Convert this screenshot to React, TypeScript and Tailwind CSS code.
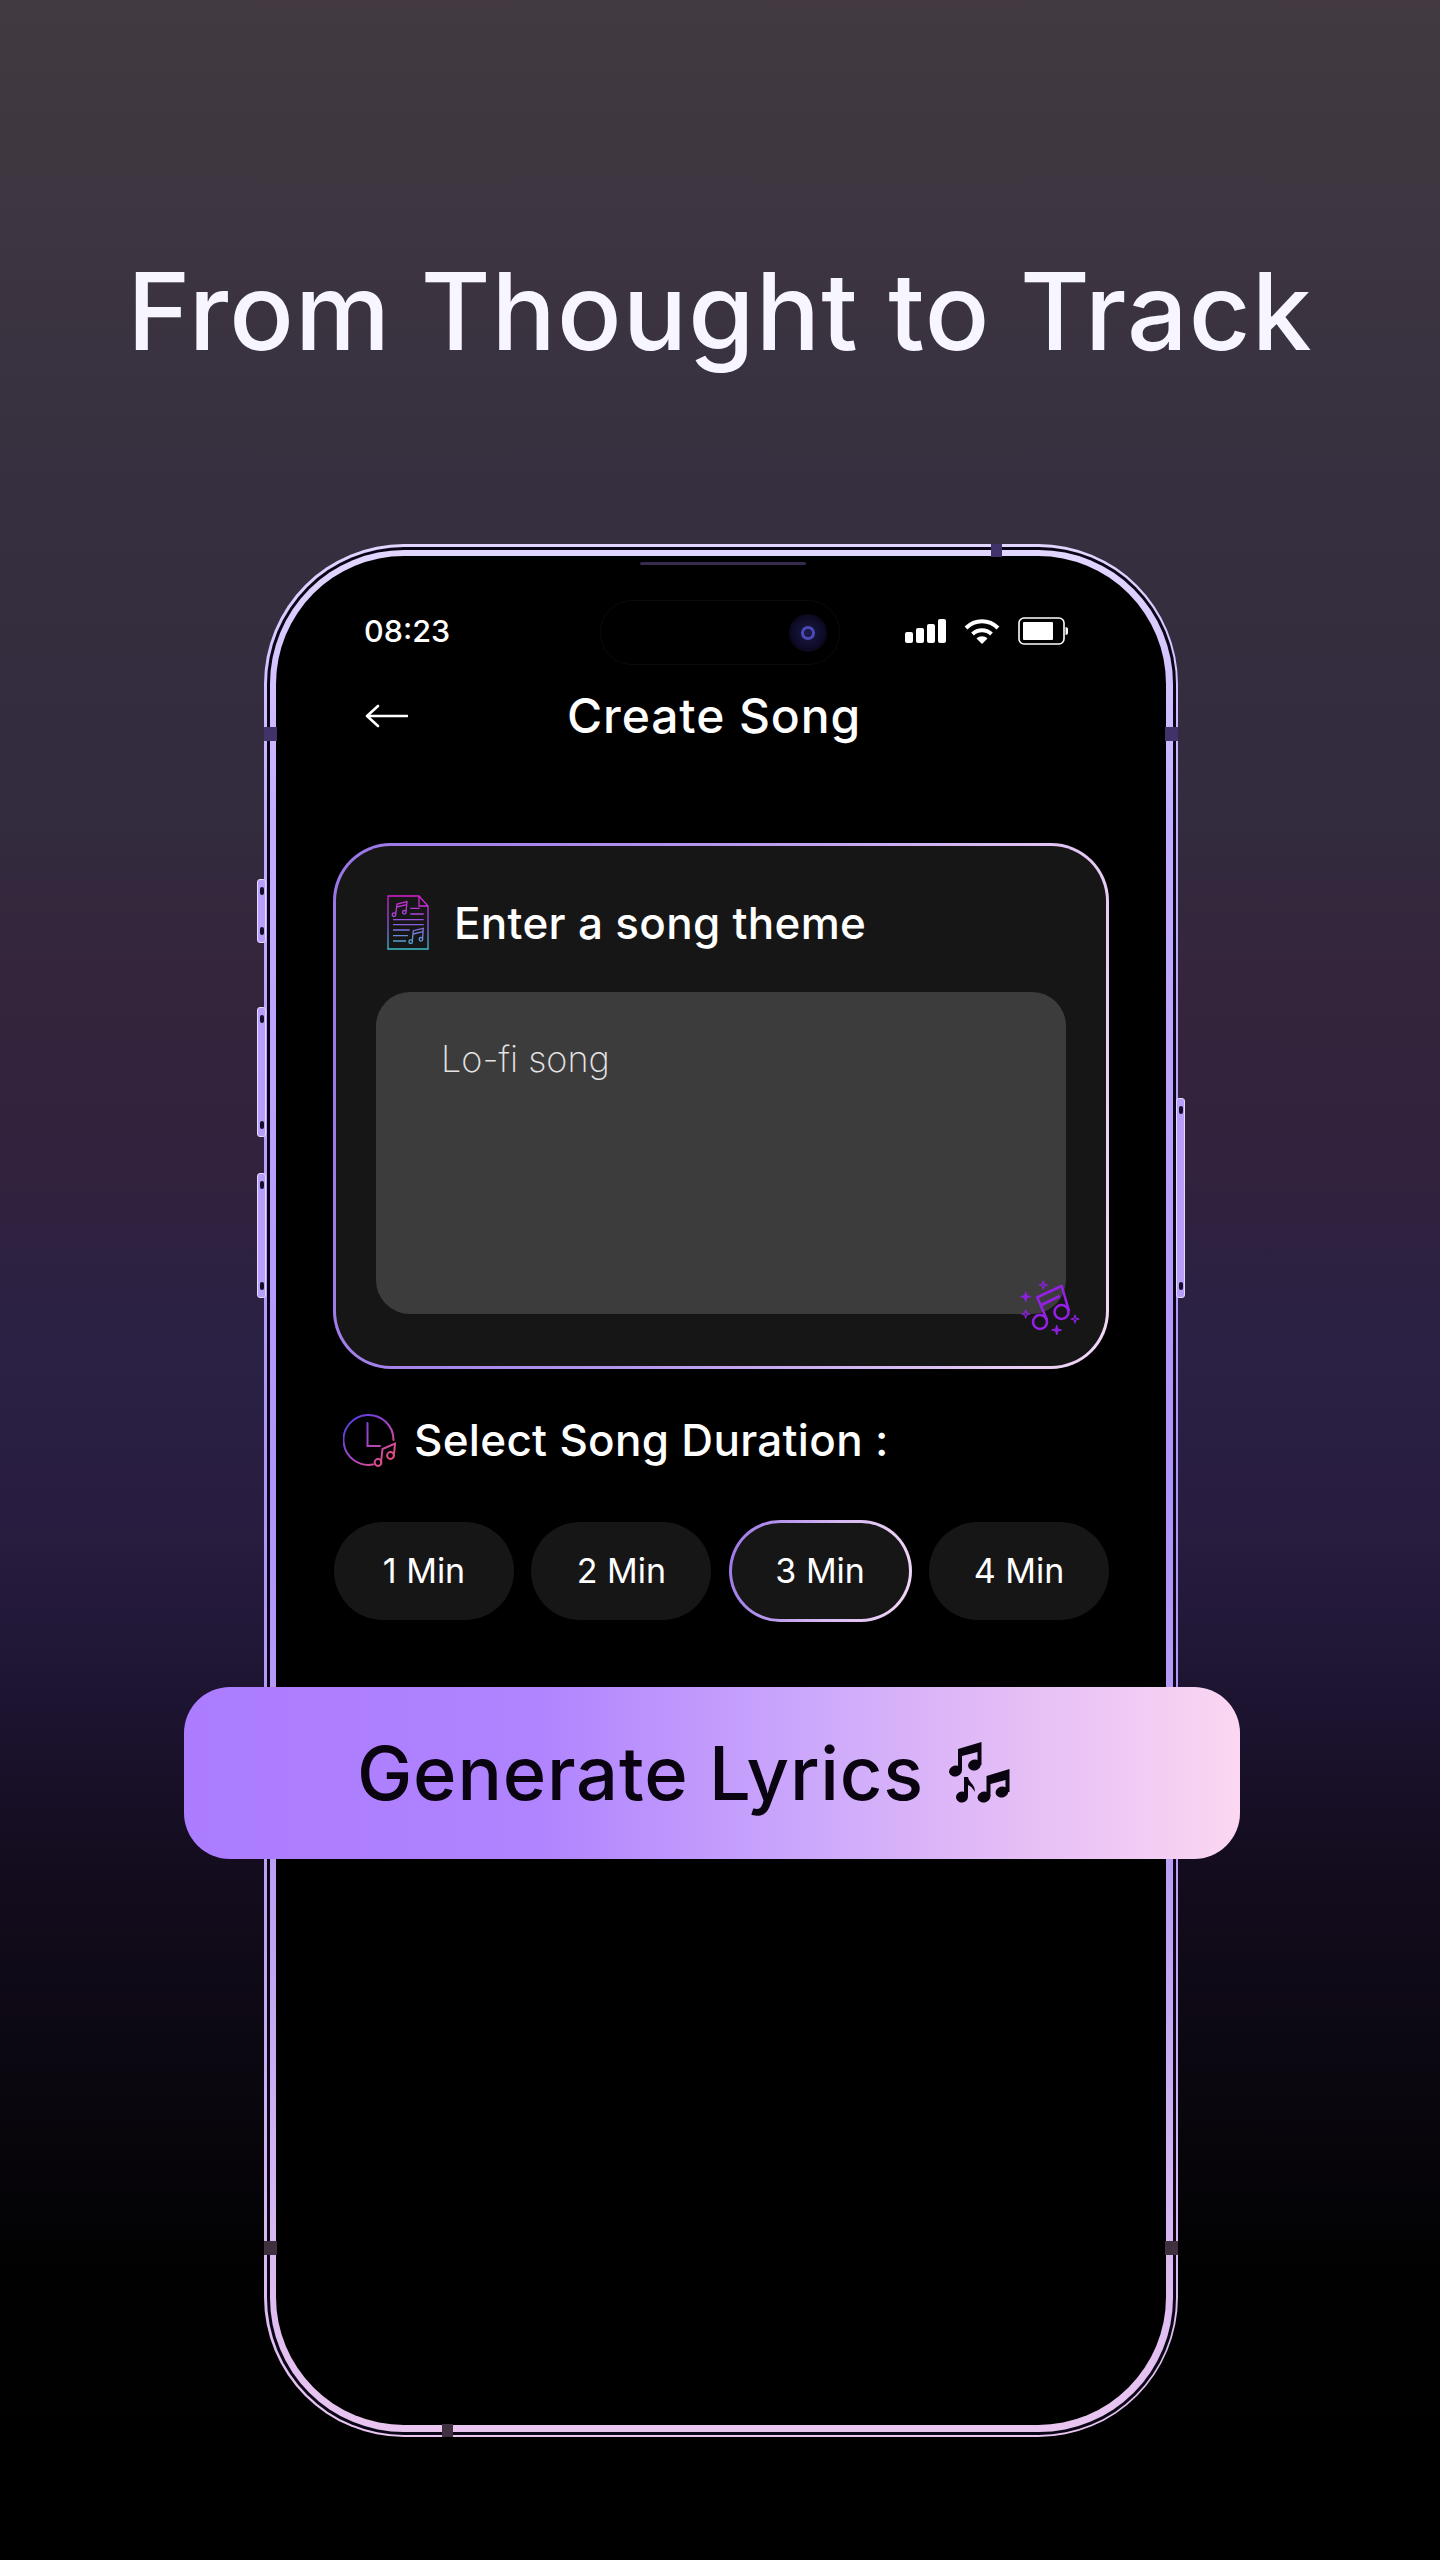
const ringGradient = 'bg-[linear-gradient(180deg,#e2d6ff_0%,#c2acff_14%,#ae93fa_50%,#bca1f4_72%,#e9c5f0_100%)]';

function Star({ x, y, r, filled }: { x: number; y: number; r: number; filled?: boolean }) {
  const k = r * 0.22;
  const d = `M${x} ${y - r}L${x + k} ${y - k}L${x + r} ${y}L${x + k} ${y + k}L${x} ${y + r}L${x - k} ${y + k}L${x - r} ${y}L${x - k} ${y - k}Z`;
  return <path d={d} fill={filled ? '#8e1fe0' : 'none'} stroke="#8e1fe0" strokeWidth={filled ? 1 : 1.2} strokeLinejoin="round" />;
}

function DocMusicIcon() {
  return (
    <svg width="42" height="55" viewBox="0 0 42 55" fill="none" className="shrink-0">
      <defs>
        <linearGradient id="docGrad" gradientUnits="userSpaceOnUse" x1="0" y1="0" x2="0" y2="55">
          <stop offset="0" stopColor="#dc1bd0" />
          <stop offset="0.55" stopColor="#8a5ee0" />
          <stop offset="1" stopColor="#3cc4cc" />
        </linearGradient>
      </defs>
      <g stroke="url(#docGrad)" strokeWidth="1.3">
        <path d="M1 1H32L41 11V54H1Z M32 1V11H41" />
        <path d="M8.7 19L10 9L20 6.7L19 16.5 M9.7 12L19.7 9.7" />
        <circle cx="7" cy="19.7" r="1.8" />
        <circle cx="17.3" cy="17.3" r="1.8" />
        <path d="M23.3 13.3H32.7 M23.3 19H36.7 M6 24.7H36.7 M6 29.7H36.7 M6 35H22.7 M6 40.7H21 M6 46H19" />
        <path d="M25.3 46L26.3 35.7L36.3 33.3L35.6 43.5 M26 39L36 36.6" />
        <circle cx="23.7" cy="46.7" r="1.8" />
        <circle cx="34" cy="44.3" r="1.8" />
      </g>
    </svg>
  );
}

function ClockMusicIcon() {
  return (
    <svg width="54" height="54" viewBox="0 0 54 54" fill="none" className="shrink-0">
      <defs>
        <linearGradient id="clockGrad" gradientUnits="userSpaceOnUse" x1="4" y1="4" x2="48" y2="50">
          <stop offset="0" stopColor="#4f3fe6" />
          <stop offset="0.5" stopColor="#a045c8" />
          <stop offset="1" stopColor="#f24d78" />
        </linearGradient>
      </defs>
      <g stroke="url(#clockGrad)" strokeWidth="2" strokeLinecap="round">
        <path d="M50.5 27A25 25 0 1 0 30 51.5" />
        <path d="M24.5 10V33H37" />
        <path d="M38 49L39.5 36L52 30.5L51 41" />
        <circle cx="35" cy="49.5" r="3.4" />
        <circle cx="47.5" cy="42.5" r="3.4" />
      </g>
    </svg>
  );
}

function SparkleNotesIcon() {
  return (
    <svg width="60" height="56" viewBox="0 0 60 56" fill="none">
      <g stroke="#9420e6" strokeWidth="2.6" strokeLinejoin="round">
        <path d="M27 40L17.3 17.3L41.7 6L49 31 M21.5 25L39.8 16" />
        <circle cx="20" cy="42" r="7" />
        <circle cx="41.5" cy="32" r="7" />
      </g>
      <Star x={5.7} y={16.7} r={5} filled />
      <Star x={36.7} y={50} r={5} filled />
      <Star x={23.3} y={5} r={4} />
      <Star x={5.7} y={34} r={4} />
      <Star x={55} y={39} r={4} />
    </svg>
  );
}

function LyricsNotes() {
  return (
    <svg width="62" height="62" viewBox="0 0 62 62" fill="#0a0410" className="shrink-0">
      <ellipse cx="7.5" cy="29" rx="6.5" ry="5.5" transform="rotate(-18 7.5 29)" />
      <ellipse cx="26.5" cy="23" rx="6.5" ry="5.5" transform="rotate(-18 26.5 23)" />
      <path d="M10 28V7L33.5 0V23H29.5V10L14 14V28Z" />
      <ellipse cx="14" cy="55" rx="6" ry="5.5" transform="rotate(-18 14 55)" />
      <path d="M16 54V35H20C21 41 27 42 27 50C24 45 22 44 20 43V54Z" />
      <ellipse cx="36" cy="55" rx="6.5" ry="5.5" transform="rotate(-18 36 55)" />
      <ellipse cx="54" cy="50" rx="6.5" ry="5.5" transform="rotate(-18 54 50)" />
      <path d="M38.5 54V34L61.5 27V50H57.5V38L42.5 42V54Z" />
    </svg>
  );
}

function SideButton({ className }: { className: string }) {
  return (
    <div className={`flex w-[9px] flex-col items-center justify-between rounded-[3px] border border-[#e4d9ff] bg-[#b99dfb] py-[7px] ${className}`}>
      <div className="h-[8px] w-[4px] rounded-full bg-[#140c28]" />
      <div className="h-[8px] w-[4px] rounded-full bg-[#140c28]" />
    </div>
  );
}

function FrameBands() {
  return (
    <svg width="914" height="1893" viewBox="0 0 914 1893" className="pointer-events-none absolute left-0 top-0">
      <g fill="#41336a">
        <rect x="0" y="183" width="13" height="14" />
        <rect x="901" y="183" width="13" height="14" />
        <rect x="727" y="0" width="11" height="13" />
      </g>
      <g fill="#3f3040">
        <rect x="0" y="1697" width="13" height="14" />
        <rect x="901" y="1697" width="13" height="14" />
        <rect x="178" y="1880" width="11" height="13" />
      </g>
    </svg>
  );
}

function StatusIcons() {
  return (
    <div className="flex items-center gap-[18px]">
      <svg width="41" height="24" viewBox="0 0 41 24" fill="white">
        <rect x="0" y="13" width="8" height="11" rx="2" />
        <rect x="11" y="9" width="8" height="15" rx="2" />
        <rect x="22" y="5" width="8" height="19" rx="2" />
        <rect x="33" y="0" width="8" height="24" rx="2" />
      </svg>
      <svg width="36" height="27" viewBox="0 0 36 27" fill="none" stroke="white" strokeWidth="4">
        <path d="M2 10C11 1 25 1 34 10" />
        <path d="M8.5 16C14 11 22 11 27.5 16" />
        <path d="M18 26L12.5 20.5C15.5 17.5 20.5 17.5 23.5 20.5Z" fill="white" stroke="none" />
      </svg>
      <svg width="50" height="28" viewBox="0 0 50 28" fill="none">
        <rect x="1" y="1" width="45" height="26" rx="5" stroke="white" strokeWidth="1.6" />
        <rect x="5" y="5" width="30" height="18" rx="1" fill="white" />
        <path d="M47.5 10C49 10 50 11 50 12V16C50 17 49 18 47.5 18Z" fill="white" />
      </svg>
    </div>
  );
}

export default function App() {
  const durations = ['1 Min', '2 Min', '3 Min', '4 Min'];

  return (
    <div className="h-[2560px] w-[1440px] overflow-hidden bg-[linear-gradient(180deg,#423a40_0%,#3d3540_9%,#37303f_17%,#332b3e_32%,#34253c_38%,#32223d_45%,#2a2144_53%,#281c3f_60%,#1c1330_67%,#150d20_72%,#0c0812_80%,#010101_89%,#000000_100%)] font-['Inter','Liberation_Sans',sans-serif]">
      <h1 className="pt-[258px] text-center text-[107px] leading-[107px] font-medium tracking-[1.1px] text-[#f7f5ff]">
        From Thought to Track
      </h1>

      {/* Phone */}
      <div className="relative ml-[264px] mt-[179px] h-[1893px] w-[914px]">
        <div className="absolute left-[-7px] top-[335px] flex flex-col">
          <SideButton className="h-[64px]" />
          <SideButton className="mt-[64px] h-[130px]" />
          <SideButton className="mt-[36px] h-[125px]" />
        </div>
        <div className="absolute right-[-7px] top-[554px]">
          <SideButton className="h-[200px]" />
        </div>

        <div className={`h-full rounded-[140px] p-[2.5px] ${ringGradient}`}>
          <div className="h-full rounded-[137px] bg-[#0a0618] p-[3px]">
            <div className={`h-full rounded-[134px] p-[6.5px] ${ringGradient}`}>
              <div className="h-full rounded-[128px] bg-black pt-[6px]">
                {/* speaker */}
                <div className="ml-[364px] h-[3px] w-[166px] rounded-full bg-[#352b4e]" />

                {/* status bar, island on top */}
                <div className="relative mt-[47px] flex h-[40px] items-center justify-between pb-[2px] pl-[88px] pr-[98px]">
                  <span className="text-[30.5px] leading-none font-medium text-white">08:23</span>
                  <div className="absolute left-[324px] top-[-12px] flex h-[65px] w-[240px] items-center justify-end rounded-[32px] border border-[#0b0b0b] pr-[12px]">
                    <div className="flex h-[38px] w-[38px] items-center justify-center rounded-full bg-[radial-gradient(circle,#1c1a4a_0%,#0d0b24_60%,#000000_100%)]">
                      <div className="h-[14px] w-[14px] rounded-full border-[3px] border-[#4c4ab8] blur-[0.5px]" />
                    </div>
                  </div>
                  <StatusIcons />
                </div>

                {/* header */}
                <div className="mt-[35px] flex h-[60px] items-center gap-[159px] pb-[2px] pl-[89px]">
                  <svg width="43" height="24" viewBox="0 0 43 24" fill="none" stroke="white" strokeWidth="2.6" strokeLinecap="round" strokeLinejoin="round" className="shrink-0">
                    <path d="M42 12H2M13 2L2 12L13 22" />
                  </svg>
                  <span className="text-[48px] leading-none font-medium tracking-[0.9px] text-white">Create Song</span>
                </div>

                <div className="mt-[96px] pl-[57px]">
                  {/* theme card */}
                  <div className="relative h-[526px] w-[776px] rounded-[58px] bg-[linear-gradient(100deg,#9a76e8_0%,#b596ee_45%,#f2d8f6_100%)] p-[3px]">
                    <div className="h-full rounded-[55px] bg-[#171617] pl-[40px] pt-[50px]">
                      <div className="flex h-[55px] items-center gap-[25px] pb-[2px] pl-[11px]">
                        <DocMusicIcon />
                        <span className="text-[44px] leading-none font-medium tracking-[0.3px] text-white">Enter a song theme</span>
                      </div>
                      <div className="mt-[41px] h-[322px] w-[690px] rounded-[34px] bg-[#3d3c3d] pl-[65px] pt-[45px]">
                        <span className="text-[36px] leading-[44px] font-extralight text-[#e4e4e4]">Lo-fi song</span>
                      </div>
                    </div>
                    <div className="absolute left-[687px] top-[437px]">
                      <SparkleNotesIcon />
                    </div>
                  </div>

                  {/* duration */}
                  <div className="mt-[44px] flex h-[54px] items-center gap-[17px] pl-[10px]">
                    <ClockMusicIcon />
                    <span className="text-[44px] leading-none font-medium tracking-[0.3px] text-white">Select Song Duration :</span>
                  </div>

                  <div className="mt-[55px] flex w-[776px] items-center justify-between pl-[1px]">
                    {durations.map((label) =>
                      label === '3 Min' ? (
                        <div key={label} className="-my-[2px] h-[102px] w-[183px] rounded-full bg-[linear-gradient(100deg,#9a76e8_0%,#d6b8f2_55%,#f2d8f6_100%)] p-[3px]">
                          <div className="flex h-full items-center justify-center rounded-full bg-[#171617] text-[34px] leading-none text-white">
                            {label}
                          </div>
                        </div>
                      ) : (
                        <div key={label} className="flex h-[98px] w-[180px] items-center justify-center rounded-full bg-[#171617] text-[34px] leading-none text-white">
                          {label}
                        </div>
                      )
                    )}
                  </div>

                  {/* generate button */}
                  <div className="relative z-10 ml-[-149px] mt-[67px] flex h-[172px] w-[1056px] items-center gap-[24px] rounded-[46px] bg-[linear-gradient(90deg,#ab7cff_0%,#b083ff_33%,#cda9fb_60%,#e6bff6_80%,#fbd7f2_100%)] pl-[173px] text-[74px] leading-none font-medium tracking-[0.8px] text-[#0a0410]">
                    <span>Generate Lyrics</span>
                    <LyricsNotes />
                  </div>
                </div>
              </div>
            </div>
          </div>
        </div>

        <FrameBands />
      </div>
    </div>
  );
}
